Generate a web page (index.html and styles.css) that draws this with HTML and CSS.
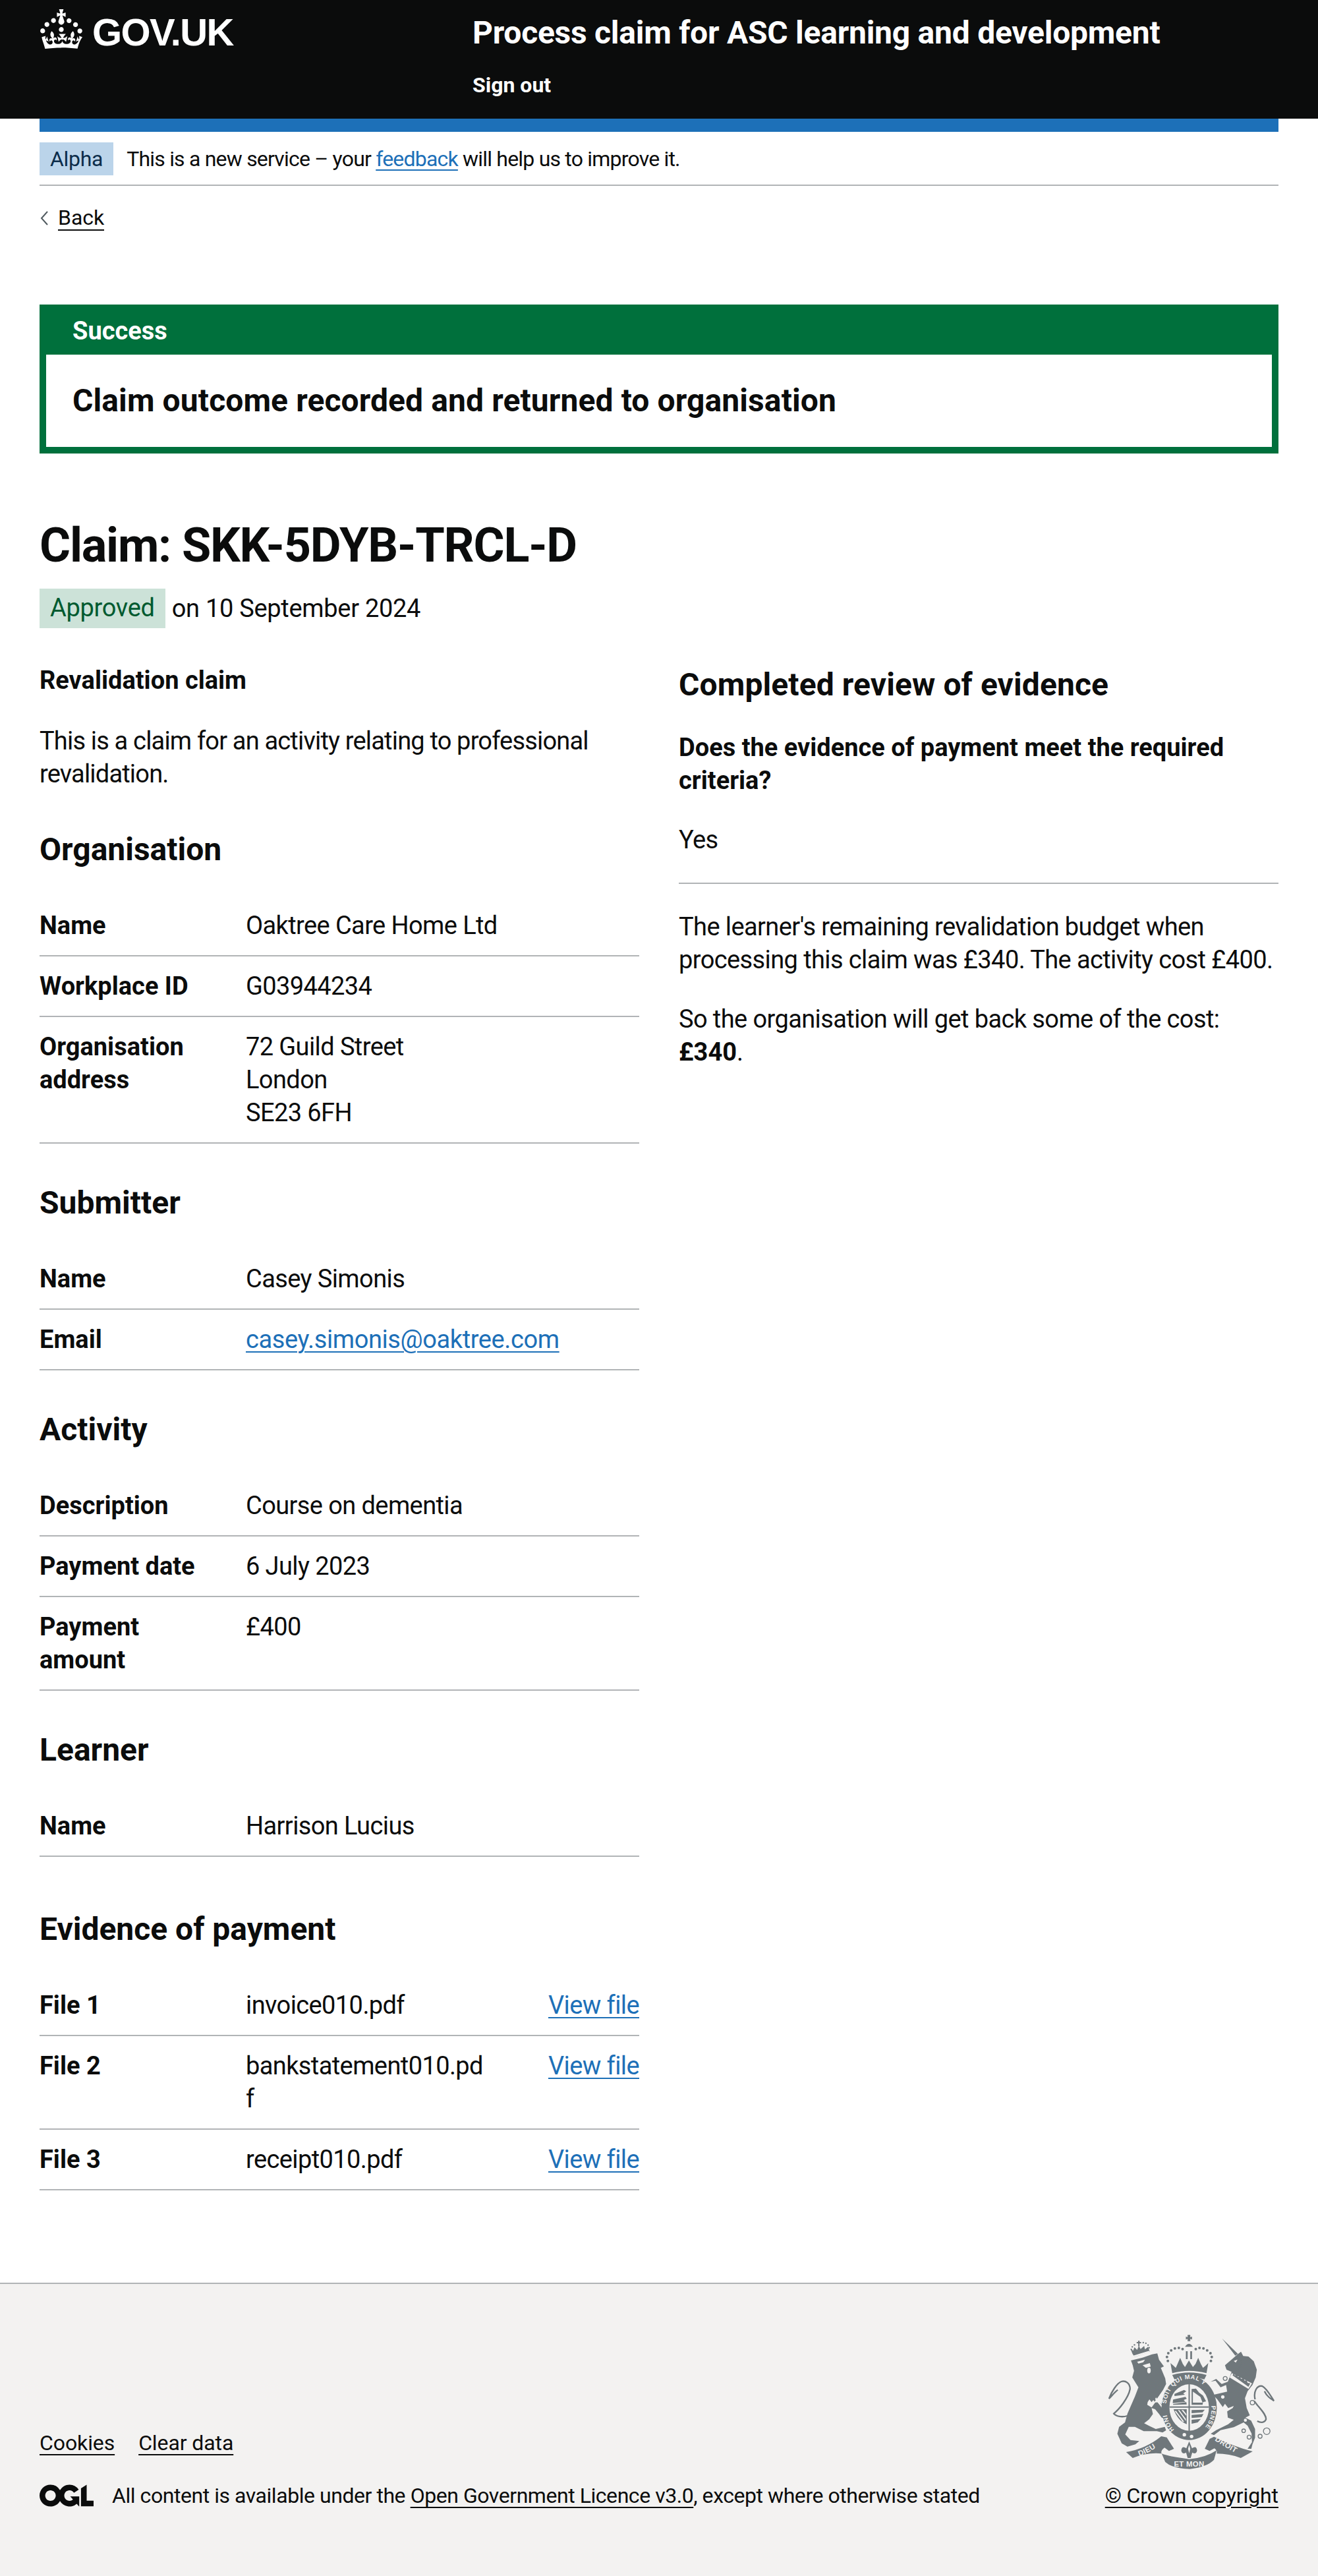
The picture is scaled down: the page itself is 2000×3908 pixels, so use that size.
FILE: index.html
```html
<!DOCTYPE html>
<html lang="en">
<head>
<meta charset="utf-8">
<title>Process claim for ASC learning and development</title>
<link rel="stylesheet" href="styles.css">
</head>
<body>
<header class="site-header">
  <a class="logo" href="#">
    <svg class="crown" viewBox="0 0 32 30" aria-hidden="true"><path d="M22.6 10.4c-1 .4-2-.1-2.4-1-.4-.9.1-2 1-2.4.9-.4 2 .1 2.4 1s-.1 2-1 2.4m-5.9 6.7c-.9.4-2-.1-2.4-1-.4-.9.1-2 1-2.4.9-.4 2 .1 2.4 1s-.1 2-1 2.4m10.8-3.7c-1 .4-2-.1-2.4-1-.4-.9.1-2 1-2.4.9-.4 2 .1 2.4 1s0 2-1 2.4m3.3 4.8c-1 .4-2-.1-2.4-1-.4-.9.1-2 1-2.4.9-.4 2 .1 2.4 1s-.1 2-1 2.4M17 4.7l2.3 1.2V2.5l-2.3.7-.2-.2.9-3h-3.4l.9 3-.2.2c-.1.1-2.3-.7-2.3-.7v3.4L15 4.7c.1.1.1.2.2.2l-1.3 4c-.1.2-.1.4-.1.6 0 1.1.8 2 1.9 2.2h.7c1-.2 1.9-1.1 1.9-2.2 0-.2 0-.4-.1-.6l-1.3-4c-.1-.2 0-.2.1-.3m-7.6 5.7c.9.4 2-.1 2.4-1 .4-.9-.1-2-1-2.4-.9-.4-2 .1-2.4 1s0 2 1 2.4m-5 3c.9.4 2-.1 2.4-1 .4-.9-.1-2-1-2.4-.9-.4-2 .1-2.4 1s.1 2 1 2.4m-3.2 4.8c.9.4 2-.1 2.4-1 .4-.9-.1-2-1-2.4-.9-.4-2 .1-2.4 1s0 2 1 2.4m14.8 11c4.4 0 8.6.3 12.3.8 1.1-4.5 2.4-7 3.7-8.8l-2.5-.9c.2 1.3.3 1.9 0 2.7-.4-.4-.8-1.1-1.1-2.3l-1.2 4c.7-.5 1.3-.8 2-.9-1.1 2.5-2.6 3.1-3.5 3-1.1-.2-1.7-1.2-1.5-2.1.3-1.2 1.5-1.5 2.1-.1 1.1-2.3-.8-3-2-2.3 1.9-1.9 2.1-3.5.6-5.6-2.1 1.6-2.1 3.2-1.2 5.5-1.2-1.4-3.2-.6-2.5 1.6.9-1.4 2.1-.5 1.9.8-.2 1.1-1.7 2.1-3.5 1.9-2.7-.2-2.9-2.1-2.9-3.6.7-.1 1.9.5 2.9 1.9l1-4.3c-1.1 1.1-2.1 1.4-3.2 1.4.4-1.2 2.1-3 2.1-3h-5.4s1.7 1.9 2.1 3c-1.1 0-2.1-.2-3.2-1.4l1 4.3c1-1.4 2.2-2 2.9-1.9-.1 1.5-.2 3.4-2.9 3.6-1.9.2-3.4-.8-3.5-1.9-.2-1.3 1-2.2 1.9-.8.7-2.3-1.2-3-2.5-1.6.9-2.2.9-3.9-1.2-5.5-1.5 2-1.3 3.7.6 5.6-1.2-.7-3.1 0-2 2.3.6-1.4 1.8-1.1 2.1.1.2.9-.3 1.9-1.5 2.1-.9.2-2.4-.5-3.5-3 .6 0 1.2.3 2 .9l-1.2-4c-.3 1.1-.7 1.9-1.1 2.3-.3-.8-.2-1.4 0-2.7l-2.9.9C1.3 23 2.6 25.5 3.7 30c3.7-.5 7.9-.8 12.3-.8"/></svg>
    <span class="wordmark">GOV.UK</span>
  </a>
  <div class="service">
    <a class="service-name" href="#">Process claim for ASC learning and development</a>
    <a class="nav-link" href="#">Sign out</a>
  </div>
</header>

<div class="page">
  <div class="blue-bar"></div>
  <div class="phase">
    <strong class="tag tag-blue">Alpha</strong>
    <span>This is a new service – your <a class="link" href="#">feedback</a> will help us to improve it.</span>
  </div>
  <a class="back" href="#"><svg class="chev" viewBox="0 0 14 22" aria-hidden="true"><path d="M12 1 3 11l9 10" /></svg><span class="back-text">Back</span></a>

  <main>
    <section class="banner">
      <h2 class="banner-title">Success</h2>
      <div class="banner-body"><p class="banner-heading">Claim outcome recorded and returned to organisation</p></div>
    </section>

    <h1 class="title">Claim: SKK-5DYB-TRCL-D</h1>
    <p class="status"><strong class="tag tag-green">Approved</strong> <span>on 10 September 2024</span></p>

    <div class="columns">
      <div class="col">
        <h2 class="h-s reval">Revalidation claim</h2>
        <p class="body">This is a claim for an activity relating to professional revalidation.</p>

        <h2 class="h-m">Organisation</h2>
        <dl class="summary">
          <div class="row"><dt>Name</dt><dd>Oaktree Care Home Ltd</dd></div>
          <div class="row"><dt>Workplace ID</dt><dd>G03944234</dd></div>
          <div class="row"><dt>Organisation address</dt><dd>72 Guild Street<br>London<br>SE23 6FH</dd></div>
        </dl>

        <h2 class="h-m">Submitter</h2>
        <dl class="summary">
          <div class="row"><dt>Name</dt><dd>Casey Simonis</dd></div>
          <div class="row"><dt>Email</dt><dd class="email"><a class="link" href="#">casey.simonis@oaktree.com</a></dd></div>
        </dl>

        <h2 class="h-m">Activity</h2>
        <dl class="summary">
          <div class="row"><dt>Description</dt><dd>Course on dementia</dd></div>
          <div class="row"><dt>Payment date</dt><dd>6 July 2023</dd></div>
          <div class="row"><dt>Payment amount</dt><dd>£400</dd></div>
        </dl>

        <h2 class="h-m">Learner</h2>
        <dl class="summary">
          <div class="row"><dt>Name</dt><dd>Harrison Lucius</dd></div>
        </dl>

        <h2 class="h-m evidence">Evidence of payment</h2>
        <dl class="summary last">
          <div class="row"><dt>File 1</dt><dd>invoice010.pdf</dd><div class="act"><a class="link" href="#">View file</a></div></div>
          <div class="row"><dt>File 2</dt><dd>bankstatement010.pd<br>f</dd><div class="act"><a class="link" href="#">View file</a></div></div>
          <div class="row"><dt>File 3</dt><dd>receipt010.pdf</dd><div class="act"><a class="link" href="#">View file</a></div></div>
        </dl>
      </div>

      <div class="col">
        <h2 class="h-m review">Completed review of evidence</h2>
        <h3 class="h-s">Does the evidence of payment meet the required criteria?</h3>
        <p class="body">Yes</p>
        <hr class="rule">
        <p class="body">The learner's remaining revalidation budget when processing this claim was £340. The activity cost £400.</p>
        <p class="body">So the organisation will get back some of the cost: <strong>£340</strong>.</p>
      </div>
    </div>
  </main>
</div>

<footer class="footer">
  <div class="footer-inner">
    <div class="footer-left">
      <ul class="footer-links">
        <li><a class="flink" href="#">Cookies</a></li>
        <li><a class="flink" href="#">Clear data</a></li>
      </ul>
      <div class="licence">
        <svg class="ogl" viewBox="0 0 483.2 195.7" aria-hidden="true"><path d="M421.5 142.8V.1l-50.7 32.3v161.1h112.4v-50.7zm-122.3-9.6A47.12 47.12 0 0 1 221 97.8c0-26 21.1-47.1 47.1-47.1 16.7 0 31.4 8.7 39.7 21.8l42.7-27.2A97.63 97.63 0 0 0 268.1 0c-36.5 0-68.3 20.1-85.1 49.7A98 98 0 0 0 97.8 0C43.9 0 0 43.9 0 97.8s43.9 97.8 97.8 97.8c36.5 0 68.3-20.1 85.1-49.7a97.76 97.76 0 0 0 149.6 25.4l19.4 22.2h3v-87.8h-80l24.3 27.5zM97.8 145c-26 0-47.1-21.1-47.1-47.1s21.1-47.1 47.1-47.1 47.2 21 47.2 47S123.8 145 97.8 145"/></svg>
        <span class="licence-text">All content is available under the <a class="flink" href="#">Open Government Licence v3.0</a>, except where otherwise stated</span>
      </div>
    </div>
    <div class="footer-right">
      <svg class="crest" viewBox="130 68 755 618" role="img" aria-label="Royal coat of arms">
        <g transform="translate(120 60)">
          <g class="c-fill">
            <path d="M112 128 L165 115 L208 100 L232 96 L240 125 L262 155 L248 162 L268 210 L272 235 L258 262 L232 300 L216 320 L240 318 L262 335 L282 360 L287 388 L272 396 L252 388 L240 372 L222 350 L206 345 L212 372 L195 396 L172 414 L195 426 L225 440 L266 430 L272 446 L256 456 L230 450 L170 450 L130 430 L102 430 L86 465 L110 490 L150 495 L132 510 L96 520 L70 505 L50 462 L58 430 L85 410 L96 370 L130 292 L146 250 L130 225 L118 205 L126 175 L120 150 Z"/>
            <path d="M118 96 L110 74 L122 84 L128 68 L140 80 L148 62 L156 76 L172 62 L176 78 L190 66 L198 88 L128 112 Z"/>
            <path d="M145 38h6v6h7v6h-7v14h-6v-14h-7v-6h7z"/>
            <circle cx="114" cy="78" r="3.5"/><circle cx="118" cy="66" r="3.5"/><circle cx="128" cy="57" r="3.5"/><circle cx="168" cy="47" r="3.5"/><circle cx="180" cy="50" r="3.5"/><circle cx="190" cy="58" r="3.5"/><circle cx="195" cy="70" r="3.5"/>
          </g>
          <g class="c-bg">
            <path d="M122 106 L196 84 L198 90 L126 113 Z"/>
            <path d="M140 134 L176 124 L168 136 L146 142 Z"/>
            <path d="M165 150 L198 140 L202 156 L180 162 Z"/>
            <ellipse cx="194" cy="174" rx="8" ry="13"/>
            <path d="M226 296 L286 376 L283 382 L222 304 Z"/>
            <path d="M188 318 L196 305 L206 318 L214 308 L222 320 L206 342 L186 330 Z"/>
          </g>
          <path class="c-line" d="M96 380C70 388 44 382 34 370 58 350 100 300 108 258 108 232 88 218 68 224 48 232 24 270 12 302 26 288 38 272 52 262"/>
        </g>
        <g transform="translate(495 60)">
          <g class="c-fill">
            <path d="M152 28 L224 98 L212 106 Z"/>
            <path d="M165 150 L200 120 L222 100 L238 88 L248 108 L272 110 L296 132 L310 170 L305 205 L290 240 L268 268 L256 300 L264 345 L278 378 L258 388 L284 402 L302 440 L302 480 L290 510 L285 530 L268 530 L288 500 L286 460 L268 425 L250 410 L205 432 L145 445 L115 468 L100 462 L125 445 L180 418 L205 398 L178 388 L175 360 L200 345 L205 335 L180 345 L165 325 L155 340 L130 305 L110 285 L140 278 L175 270 L170 240 L145 250 L122 220 L100 225 L125 212 L150 235 L178 225 L190 195 L195 180 L172 170 Z"/>
          </g>
          <g class="c-bg">
            <path d="M196 186 L288 232 L272 258 L186 205 Z"/>
            <path d="M205 130 L222 124 L214 138 Z"/>
            <circle cx="155" cy="294" r="8"/>
            <circle cx="283" cy="365" r="6"/><circle cx="258" cy="400" r="7"/>
          </g>
          <g class="c-fill">
            <path d="M200 196 L204 186 L210 196 L220 192 L224 204 L234 200 L238 212 L250 208 L254 220 L264 218 L268 230 L280 232 L272 248 Z"/>
          </g>
          <g class="c-line">
            <path d="M302 305C294 270 310 240 335 245 355 255 370 285 388 312 370 300 355 290 345 268M298 312C320 345 352 370 352 395 348 410 330 414 312 404"/>
            <path class="c-thin" d="M236 128Q252 150 216 172"/>
            <circle class="c-thin" cx="166" cy="210" r="9"/><circle class="c-thin" cx="155" cy="294" r="11"/><circle class="c-thin" cx="290" cy="320" r="10"/>
            <circle class="c-thin" cx="250" cy="448" r="8"/><circle class="c-thin" cx="275" cy="477" r="9"/><circle class="c-thin" cx="325" cy="473" r="9"/><circle class="c-thin" cx="355" cy="450" r="15"/>
          </g>
        </g>
        <g class="c-fill">
          <path d="M490 72h12v10l8-3v14l-8-3v10h-12v-10l-8 3v-14l8 3z"/>
          <path d="M478 126q18-28 36 0z"/>
          <path d="M482 146h8v36h-8zM502 146h8v36h-8z"/>
          <path d="M412 200 Q426 212 436 222 L444 204 L456 176 L468 204 L478 218 L496 188 L514 218 L526 204 L538 176 L550 204 L560 222 Q572 212 584 200 L576 246 Q497 224 420 246 Z"/>
          <path d="M420 254 Q497 232 576 254 L566 274 Q497 254 430 274 Z"/>
          <circle cx="400" cy="190" r="6"/><circle cx="396" cy="172" r="6"/><circle cx="402" cy="155" r="6"/><circle cx="415" cy="142" r="6"/><circle cx="432" cy="133" r="6"/><circle cx="450" cy="131" r="6"/><circle cx="467" cy="136" r="6"/>
          <circle cx="596" cy="190" r="6"/><circle cx="600" cy="172" r="6"/><circle cx="594" cy="155" r="6"/><circle cx="579" cy="142" r="6"/><circle cx="562" cy="133" r="6"/><circle cx="544" cy="131" r="6"/><circle cx="527" cy="136" r="6"/>
          <ellipse cx="497" cy="404" rx="126" ry="146"/>
        </g>
        <ellipse class="c-bg" cx="497" cy="402" rx="90" ry="106"/>
        <g class="c-fill">
          <rect x="407" y="397" width="180" height="6"/>
          <rect x="494" y="296" width="6" height="214"/>
          <path d="M430 340l44-18 10 6-14 10 8 6-48 6zM424 366l56-12 6 8-14 6 8 8-58 6zM424 386l60-8 2 10-62 2z"/>
          <path d="M508 318l20-2 14 18 18 14 14 26-14 4-2 12-50 0zM514 330l0 50 44 0-10-26z" fill-rule="evenodd"/>
          <path d="M426 410h60v68q-40-14-60-68z"/>
          <path d="M508 414l60-2-10 12-50 4zM508 436l54-4-8 14-46 4zM508 458l42-4-14 16-28 6z"/>
        </g>
        <g class="c-bg"><path d="M436 416l38 50-6 2-36-48zM452 414l30 40 0 10-36-50zM470 414l14 18 0 8-22-26z"/></g>
        <circle class="c-bg" cx="475" cy="526" r="8"/><circle class="c-bg" cx="508" cy="534" r="8"/>
        <g class="c-fill">
          <path d="M210 605Q300 590 370 533L395 538 428 590 405 600 385 585Q365 600 372 612 310 605 240 632Z"/>
          <path d="M372 612Q402 625 497 637 570 632 622 597L610 640Q580 672 500 682 420 680 388 650Z"/>
          <path d="M786 602Q700 580 610 535L590 545 568 590 590 600 612 588Q628 600 622 612 680 612 732 632Z"/>
          <path d="M497 556L510 588Q530 574 533 598 528 618 511 607L504 632H490L483 607Q466 618 461 598 464 574 484 588Z"/>
        </g>
        <path class="c-bg" d="M497 572l5 18-5 20-5-20z"/>
        <defs>
          <path id="ring-a" d="M392 400A105 128 0 0 1 602 400"/>
          <path id="ring-b" d="M598 392A102 122 0 0 1 560 502"/>
          <path id="ring-c" d="M432 506A102 122 0 0 1 394 424"/>
          <path id="sc-l" d="M268 624Q325 604 372 566"/>
          <path id="sc-r" d="M608 548Q660 584 735 624"/>
        </defs>
        <g class="c-text">
          <text><textPath href="#ring-a" startOffset="4%">SOIT QUI MAL Y</textPath></text>
          <text><textPath href="#ring-b" startOffset="2%">PENSE</textPath></text>
          <text><textPath href="#ring-c" startOffset="4%">HONI</textPath></text>
          <text class="c-motto"><textPath href="#sc-l" startOffset="2%">DIEU</textPath></text>
          <text class="c-motto"><textPath href="#sc-r" startOffset="4%">DROIT</textPath></text>
          <text class="c-motto" x="497" y="672" text-anchor="middle">ET MON</text>
        </g>
      </svg>
      <a class="flink" href="#">© Crown copyright</a>
    </div>
  </div>
</footer>
</body>
</html>
```

FILE: styles.css
```css
* { box-sizing: border-box; }
html, body { margin: 0; padding: 0; }
body {
  font-family: Roboto, "Liberation Sans", Arial, sans-serif;
  font-size: 38px;
  line-height: 50px;
  letter-spacing: -0.6px;
  color: #0b0c0c;
  background: #fff;
}
a { color: inherit; }
h1, h2, h3, p, dl, dd, ul { margin: 0; padding: 0; }
h1, h2, h3, strong, dt { letter-spacing: 0; }

.site-header {
  display: flex;
  height: 180px;
  padding: 0 60px;
  background: #0b0c0c;
  color: #fff;
}
.logo {
  width: 657px;
  height: 90px;
  display: flex;
  align-items: flex-start;
  gap: 14px;
  padding-top: 14px;
  text-decoration: none;
}
.crown { width: 66px; height: 60px; fill: #fff; flex: none; }
.wordmark {
  font-family: "Liberation Sans", Arial, sans-serif;
  font-weight: 700;
  font-size: 58px;
  line-height: 58px;
  letter-spacing: -1.6px;
  padding-top: 6px;
}
.service { display: flex; flex-direction: column; align-items: flex-start; padding-top: 20px; }
.service-name { font-size: 48px; line-height: 60px; font-weight: 700; text-decoration: none; letter-spacing: -0.25px; }
.nav-link { margin-top: 29px; font-size: 32px; line-height: 40px; font-weight: 700; text-decoration: none; letter-spacing: 0; }

.page { padding: 0 60px; }
.blue-bar { height: 20px; background: #1d70b8; }
.phase {
  display: flex;
  align-items: flex-start;
  gap: 20px;
  padding: 16px 0 14px;
  border-bottom: 2px solid #b1b4b6;
  font-size: 32px;
  line-height: 50px;
  letter-spacing: -0.8px;
}
.tag { display: inline-block; font-weight: 400; padding: 0 16px; height: 50px; letter-spacing: -0.3px; }
.tag-blue { background: #bbd4ea; color: #0c2d4a; }
.tag-green { background: #cce2d8; color: #005a30; font-size: 38px; height: 60px; line-height: 58px; }
.link { color: #1d70b8; text-underline-offset: 5px; text-decoration-thickness: 2px; }
.back {
  display: inline-flex;
  align-items: center;
  gap: 14px;
  margin-top: 30px;
  font-size: 32px;
  line-height: 40px;
  text-decoration: none;
  letter-spacing: 0;
}
.back-text { border-bottom: 2px solid #0b0c0c; line-height: 36px; height: 38px; }
.chev { width: 14px; height: 22px; fill: none; stroke: #505a5f; stroke-width: 2; }

main { padding-top: 108px; }
.banner { border: 10px solid #00703c; background: #00703c; }
.banner-title { color: #fff; font-size: 38px; line-height: 50px; font-weight: 700; padding: 5px 40px 11px; }
.banner-body { background: #fff; padding: 40px; }
.banner-heading { font-size: 48px; line-height: 60px; font-weight: 700; letter-spacing: .1px; }

.title { font-size: 72px; line-height: 80px; font-weight: 700; margin-top: 100px; letter-spacing: -1.2px; }
.status { display: flex; align-items: center; gap: 10px; margin-top: 25px; letter-spacing: -0.3px; }

.columns { display: grid; grid-template-columns: 1fr 1fr; gap: 60px; margin-top: 56px; }
.col { min-width: 0; }
.h-s { font-size: 38px; line-height: 50px; font-weight: 700; }
.h-m { font-size: 48px; line-height: 60px; font-weight: 700; margin-top: 60px; margin-bottom: 40px; }
.reval { margin-top: -2px; margin-bottom: 42px; }
.reval + .body { letter-spacing: -0.82px; }
.body { margin-bottom: 40px; }
.review { margin-top: 0; letter-spacing: .1px; }
.evidence { margin-top: 80px; }
.h-s + .body { margin-top: 40px; }
.rule { border: 0; border-top: 2px solid #b1b4b6; margin: 40px 0; height: 0; }

.row {
  display: grid;
  grid-template-columns: 313px 415px 182px;
  padding: 20px 0;
  border-bottom: 2px solid #b1b4b6;
}
.row dt { font-weight: 700; padding-right: 40px; }
.row dd { padding-right: 40px; }
.row dd:last-child { grid-column: span 2; padding-right: 0; }
.row dd.email { letter-spacing: -0.4px; }
.act { text-align: right; }
.last { margin-bottom: 140px; }

.footer { background: #f3f2f1; border-top: 2px solid #b1b4b6; font-size: 32px; line-height: 40px; letter-spacing: -0.1px; }
.footer-inner {
  display: flex;
  justify-content: space-between;
  align-items: flex-end;
  padding: 80px 60px 102px;
  height: 443px;
}
.footer-links { display: flex; gap: 36px; list-style: none; margin-bottom: 40px; }
.flink { text-underline-offset: 6px; text-decoration-thickness: 2px; }
.licence { display: flex; align-items: center; gap: 28px; }
.licence-text { letter-spacing: -0.45px; }
.ogl { width: 82px; height: 34px; fill: #0b0c0c; flex: none; }
.footer-right { display: flex; flex-direction: column; align-items: center; gap: 19px; }
.crest { width: 252px; height: 206px; }
.c-fill { fill: #6f777b; }
.c-bg { fill: #f3f2f1; }
.c-line { fill: none; stroke: #6f777b; stroke-width: 7; }
.c-thin { stroke-width: 4; }
.c-text { fill: #f3f2f1; font-family: "Liberation Sans", Arial, sans-serif; font-size: 28px; font-weight: 700; letter-spacing: 2px; }
.c-motto { font-size: 34px; letter-spacing: 1px; }
```
